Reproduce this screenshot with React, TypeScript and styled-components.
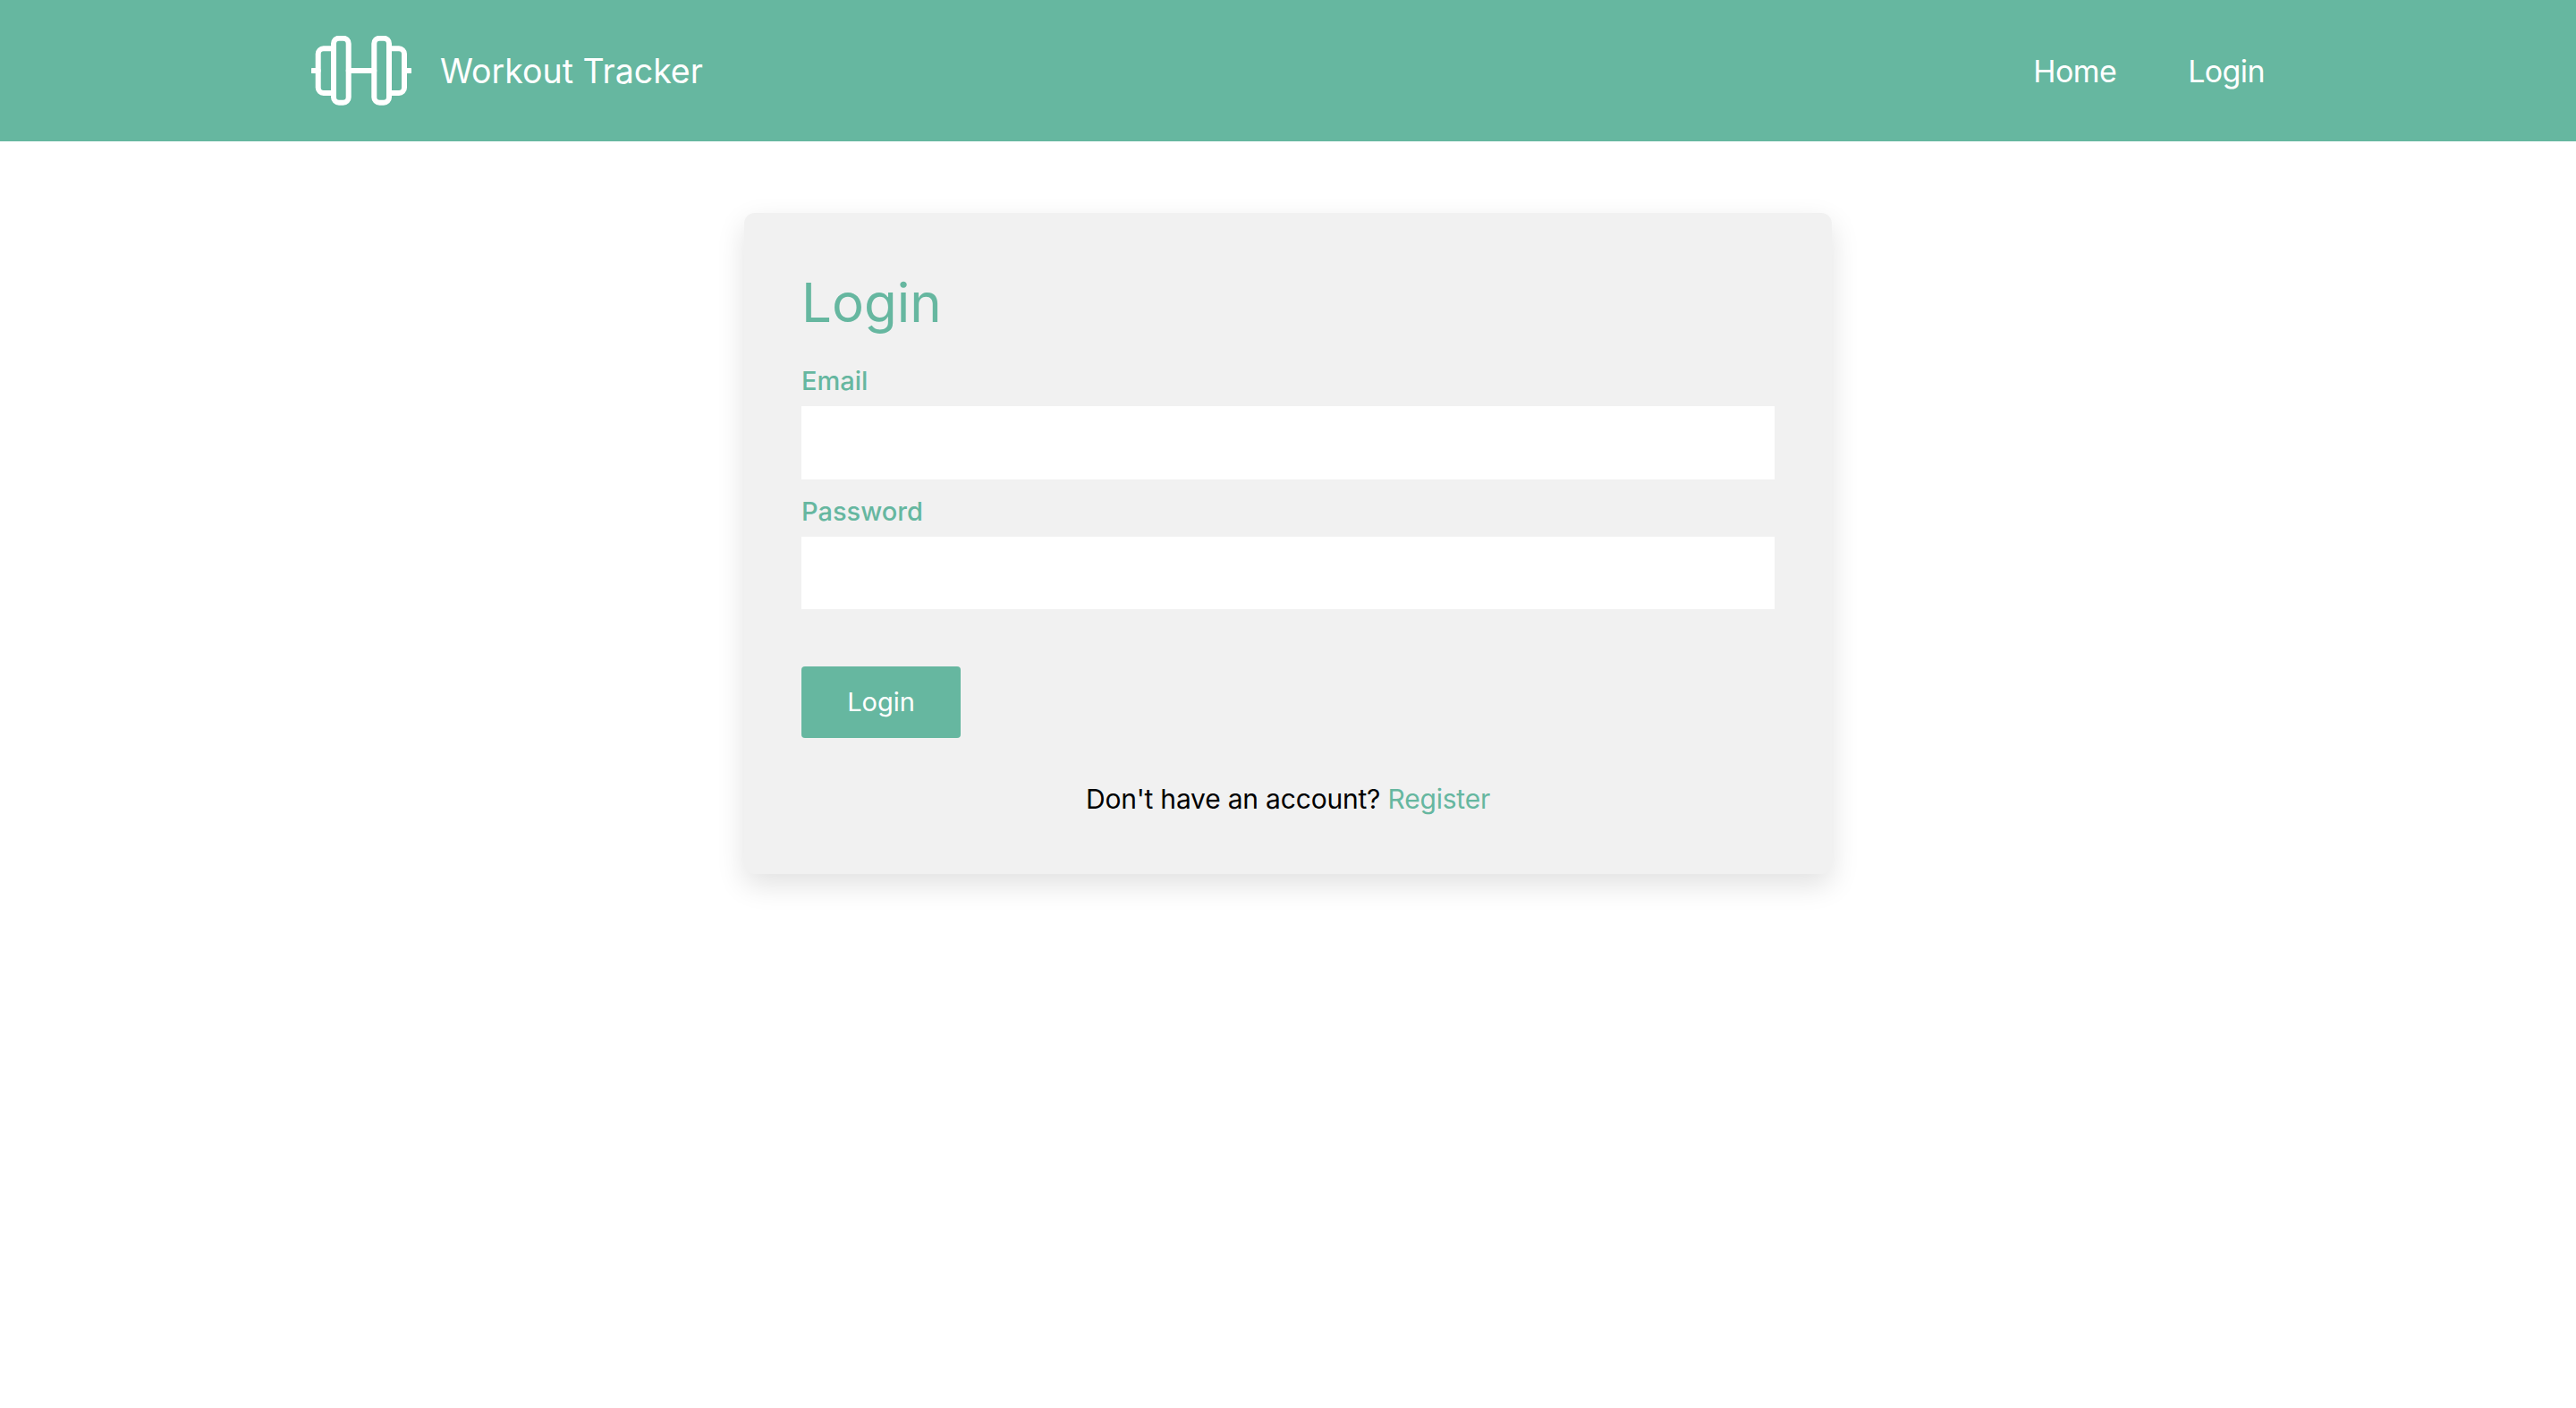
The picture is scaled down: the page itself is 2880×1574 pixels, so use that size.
import React from 'react';
import styled, { createGlobalStyle } from 'styled-components';

const GlobalStyle = createGlobalStyle`
  * {
    box-sizing: border-box;
  }

  body {
    margin: 0;
    background: white;
    font-family: 'Inter', 'Liberation Sans', sans-serif;
  }
`;

const NavBar = styled.nav`
  height: 158px;
  padding: 0 348px;
  background: #66b7a0;
  display: flex;
  align-items: center;
  justify-content: space-between;
  color: white;
`;

const Brand = styled.a`
  display: flex;
  align-items: center;
  gap: 32px;
  font-size: 37.5px;
  color: white;
  text-decoration: none;
`;

const NavLinks = styled.div`
  display: flex;
  gap: 80px;
`;

const NavLink = styled.a`
  font-size: 34px;
  letter-spacing: -0.6px;
  color: white;
  text-decoration: none;
`;

const Main = styled.main`
  display: flex;
  justify-content: center;
  align-items: flex-start;
  min-height: 1416px;
  padding-top: 80px;
`;

const Card = styled.div`
  width: 1216px;
  height: 739px;
  padding: 64px;
  background: #f1f1f1;
  border-radius: 12px;
  box-shadow: 0 12px 32px rgba(0, 0, 0, 0.12);
`;

const Heading = styled.h1`
  margin: 0 0 16px;
  height: 72px;
  line-height: 72px;
  font-size: 60px;
  font-weight: 400;
  color: #66b7a0;
`;

const Field = styled.div`
  display: flex;
  flex-direction: column;
`;

const Label = styled.label`
  height: 64px;
  padding-top: 16px;
  line-height: 40px;
  font-size: 29px;
  font-weight: 500;
  color: #66b7a0;
`;

const Input = styled.input`
  height: 81.6px;
  border: none;
  outline: none;
  background: white;
  font-size: 32px;
`;

const SubmitButton = styled.button`
  display: block;
  width: 178px;
  height: 80px;
  margin-top: 63.8px;
  border: none;
  border-radius: 4px;
  background: #66b7a0;
  color: white;
  font-family: inherit;
  font-size: 29px;
  cursor: pointer;
`;

const Footnote = styled.p`
  margin: 48px 0 0;
  line-height: 40px;
  text-align: center;
  font-size: 30px;
  letter-spacing: -0.2px;
  color: black;
`;

const FootLink = styled.a`
  color: #66b7a0;
  text-decoration: none;
`;

const DumbbellIcon = () => (
  <svg width="112" height="78" viewBox="0 0 112 78" fill="none" stroke="white" strokeWidth="6" strokeLinecap="round">
    <rect x="25" y="2.7" width="16.7" height="72" rx="6" />
    <rect x="70.3" y="2.7" width="16.7" height="72" rx="6" />
    <path d="M25 14.3H13.7a6 6 0 0 0-6 6V58a6 6 0 0 0 6 6H25" />
    <path d="M87 14.3h11a6 6 0 0 1 6 6V58a6 6 0 0 1-6 6H87" />
    <path d="M41.7 39H70.3M1.5 39H7.7M104 39h6.5" />
  </svg>
);

export default function App() {
  return (
    <>
      <GlobalStyle />
      <NavBar>
        <Brand href="#">
          <DumbbellIcon />
          Workout Tracker
        </Brand>
        <NavLinks>
          <NavLink href="#">Home</NavLink>
          <NavLink href="#">Login</NavLink>
        </NavLinks>
      </NavBar>
      <Main>
        <Card>
          <Heading>Login</Heading>
          <Field>
            <Label htmlFor="email">Email</Label>
            <Input id="email" type="email" />
          </Field>
          <Field>
            <Label htmlFor="password">Password</Label>
            <Input id="password" type="password" />
          </Field>
          <SubmitButton type="submit">Login</SubmitButton>
          <Footnote>
            Don't have an account? <FootLink href="#">Register</FootLink>
          </Footnote>
        </Card>
      </Main>
    </>
  );
}
